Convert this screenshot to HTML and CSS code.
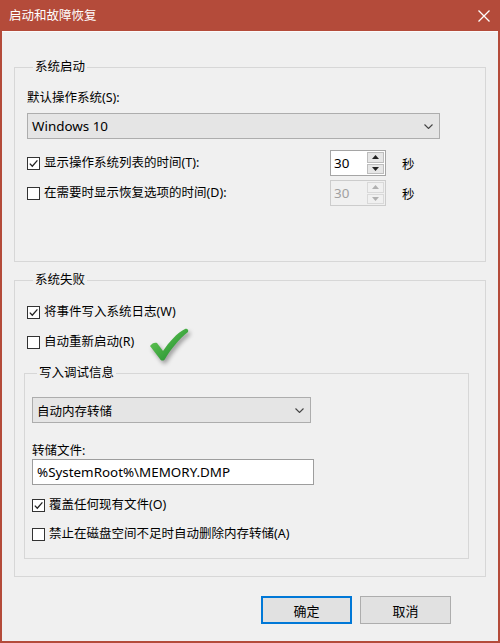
FILE: index.html
```html
<!DOCTYPE html>
<html lang="zh-CN">
<head>
  <meta charset="UTF-8">
  <title>启动和故障恢复</title>
  <link rel="stylesheet" href="styles.css">
</head>
<body>
  <div class="window">
    <div class="titlebar">
      <span class="title">启动和故障恢复</span>
      <svg class="close" width="12" height="12" viewBox="0 0 12 12">
        <path d="M0.5 0.5 L11.5 11.5 M11.5 0.5 L0.5 11.5" stroke="#fff" stroke-width="1.3" fill="none"/>
      </svg>
    </div>

    <div class="content">
      <!-- 系统启动 -->
      <div class="group startup">
        <div class="group-title">系统启动</div>
        <div class="field-label">默认操作系统(S):</div>
        <div class="select os-select">
          <span class="latin">Windows 10</span>
          <svg width="9" height="5" viewBox="0 0 9 5"><path d="M0.5 0.5 L4.5 4.5 L8.5 0.5" stroke="#444" stroke-width="1.1" fill="none"/></svg>
        </div>

        <div class="spin-row first">
          <div class="check-row">
            <span class="box checked"><svg width="11" height="11" viewBox="0 0 11 11"><path d="M1.8 5.6 L4.3 8.2 L9.4 2.4" stroke="#222" stroke-width="1.3" fill="none"/></svg></span>
            <span>显示操作系统列表的时间(T):</span>
          </div>
          <div class="spin">
            <span class="spin-value latin">30</span>
            <span class="spin-buttons">
              <span class="spin-btn"><svg width="7" height="4" viewBox="0 0 7 4"><path d="M0 4 L3.5 0 L7 4 Z" fill="#222"/></svg></span>
              <span class="spin-btn"><svg width="7" height="4" viewBox="0 0 7 4"><path d="M0 0 L3.5 4 L7 0 Z" fill="#222"/></svg></span>
            </span>
          </div>
          <span class="unit">秒</span>
        </div>

        <div class="spin-row second">
          <div class="check-row">
            <span class="box"></span>
            <span>在需要时显示恢复选项的时间(D):</span>
          </div>
          <div class="spin disabled">
            <span class="spin-value latin">30</span>
            <span class="spin-buttons">
              <span class="spin-btn"><svg width="7" height="4" viewBox="0 0 7 4"><path d="M0 4 L3.5 0 L7 4 Z" fill="#b0b0b0"/></svg></span>
              <span class="spin-btn"><svg width="7" height="4" viewBox="0 0 7 4"><path d="M0 0 L3.5 4 L7 0 Z" fill="#b0b0b0"/></svg></span>
            </span>
          </div>
          <span class="unit">秒</span>
        </div>
      </div>

      <!-- 系统失败 -->
      <div class="group failure">
        <div class="group-title">系统失败</div>
        <div class="check-row log-row">
          <span class="box checked"><svg width="11" height="11" viewBox="0 0 11 11"><path d="M1.8 5.6 L4.3 8.2 L9.4 2.4" stroke="#222" stroke-width="1.3" fill="none"/></svg></span>
          <span>将事件写入系统日志(W)</span>
        </div>
        <div class="check-row restart-row">
          <span class="box"></span>
          <span>自动重新启动(R)</span>
          <svg class="tick" width="42" height="36" viewBox="0 0 42 36">
            <defs>
              <linearGradient id="tickFill" x1="0" y1="0" x2="1" y2="1">
                <stop offset="0" stop-color="#6fd05a"/>
                <stop offset="1" stop-color="#17852a"/>
              </linearGradient>
            </defs>
            <path d="M2 19 C4 16 7 15 9 16 L15 24 C21 15 29 6 37 2 C39 1 41 3 40 5 C31 12 23 22 17 32 C16 34 13 34 12 32 Z" fill="url(#tickFill)"/>
          </svg>
        </div>

        <div class="group debug">
          <div class="group-title">写入调试信息</div>
          <div class="select dump-select">
            <span>自动内存转储</span>
            <svg width="9" height="5" viewBox="0 0 9 5"><path d="M0.5 0.5 L4.5 4.5 L8.5 0.5" stroke="#444" stroke-width="1.1" fill="none"/></svg>
          </div>
          <div class="field-label dump-label">转储文件:</div>
          <div class="text-input latin">%SystemRoot%\MEMORY.DMP</div>
          <div class="check-row overwrite-row">
            <span class="box checked"><svg width="11" height="11" viewBox="0 0 11 11"><path d="M1.8 5.6 L4.3 8.2 L9.4 2.4" stroke="#222" stroke-width="1.3" fill="none"/></svg></span>
            <span>覆盖任何现有文件(O)</span>
          </div>
          <div class="check-row lowdisk-row">
            <span class="box"></span>
            <span>禁止在磁盘空间不足时自动删除内存转储(A)</span>
          </div>
        </div>
      </div>

      <div class="actions">
        <button class="btn primary">确定</button>
        <button class="btn">取消</button>
      </div>
    </div>
  </div>
</body>
</html>
```

FILE: styles.css
```css
body {
  margin: 0;
  font-family: "Noto Sans", "Noto Sans CJK SC", sans-serif;
  font-size: 12.5px;
  color: #000;
}

.latin {
  font-size: 13.4px;
}

.window {
  width: 500px;
  height: 643px;
  box-sizing: border-box;
  border: 2px solid #b44b3a;
  border-top: 0;
  background: #f0f0f0;
}

.titlebar {
  height: 31px;
  background: #b44b3a;
  color: #fff;
  display: flex;
  align-items: center;
  justify-content: space-between;
  padding: 0 8px 0 7px;
}

.title {
  line-height: 18px;
}

.content {
  padding: 36px 12px 0 12px;
  box-shadow: inset 0 1px 0 #fbfbfb;
}

/* group boxes */
.group {
  border: 1px solid #d7d7d7;
  padding: 0 12px;
}

.group-title {
  margin: -10px 0 0 6px;
  padding: 0 2px;
  width: fit-content;
  background: #f0f0f0;
  line-height: 18px;
}

.startup {
  padding-bottom: 55px;
}

.field-label {
  margin-top: 13px;
  line-height: 18px;
}

.select {
  height: 26px;
  box-sizing: border-box;
  border: 1px solid #adadad;
  background: #e5e5e5;
  display: flex;
  align-items: center;
  justify-content: space-between;
  padding: 0 6px 0 4px;
}

.os-select {
  margin-top: 6px;
  width: 413px;
}

.spin-row {
  display: grid;
  grid-template-columns: 287px 56px auto;
  column-gap: 16px;
  align-items: center;
  height: 26px;
}

.spin-row.first {
  margin-top: 11px;
}

.spin-row.second {
  margin-top: 4px;
}

.check-row {
  display: flex;
  align-items: center;
  gap: 4px;
  line-height: 18px;
}

.box {
  width: 13px;
  height: 13px;
  flex: none;
  box-sizing: border-box;
  border: 1px solid #333;
  background: #fff;
  display: flex;
  align-items: center;
  justify-content: center;
}

.spin {
  display: flex;
  height: 26px;
  box-sizing: border-box;
  border: 1px solid #a5a5a5;
  background: #fff;
}

.spin-value {
  flex: 1;
  padding-left: 3px;
  line-height: 24px;
}

.spin-buttons {
  width: 17px;
  display: flex;
  flex-direction: column;
  gap: 1px;
  padding: 1px;
}

.spin-btn {
  flex: 1;
  background: #e6e6e6;
  border: 1px solid #bdbdbd;
  display: flex;
  align-items: center;
  justify-content: center;
}

.spin.disabled {
  background: #f0f0f0;
  border-color: #cccccc;
  color: #a0a0a0;
}

.spin.disabled .spin-btn {
  background: #f0f0f0;
  border-color: #d9d9d9;
}

.failure {
  margin-top: 18px;
  padding-bottom: 17px;
}

.log-row {
  margin-top: 14px;
}

.restart-row {
  margin-top: 12px;
  position: relative;
}

.tick {
  position: absolute;
  left: 121px;
  top: -6px;
  filter: drop-shadow(2px 3px 2px rgba(0, 0, 0, 0.35));
}

.debug {
  margin: 22px 0 0 -3px;
  width: 445px;
  box-sizing: border-box;
  padding: 0 7px 15px;
}

.debug .group-title {
  margin-left: 5px;
}

.dump-select {
  margin-top: 15px;
  width: 279px;
}

.dump-label {
  margin-top: 20px;
  line-height: 16px;
}

.text-input {
  width: 282px;
  height: 26px;
  box-sizing: border-box;
  border: 1px solid #9d9d9d;
  background: #fff;
  padding-left: 4px;
  line-height: 24px;
}

.overwrite-row,
.lowdisk-row {
  margin-top: 11px;
}

.actions {
  display: flex;
  justify-content: flex-end;
  gap: 8px;
  margin-top: 19px;
  padding-right: 35px;
}

.btn {
  width: 91px;
  height: 28px;
  box-sizing: border-box;
  border: 1px solid #adadad;
  background: #e1e1e1;
  font-family: "Noto Sans", "Noto Sans CJK SC", sans-serif;
  font-size: 13px;
  color: #000;
  padding: 0;
}

.btn.primary {
  border: 2px solid #0078d7;
}
```
